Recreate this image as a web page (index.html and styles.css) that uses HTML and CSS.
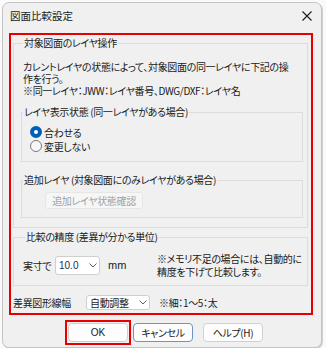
FILE: index.html
```html
<!DOCTYPE html>
<html lang="ja">
<head>
    <meta charset="UTF-8">
    <title>図面比較設定</title>
    <link rel="stylesheet" href="styles.css">
</head>
<body>
    <div class="window">
        <div class="titlebar">
            <span class="title">図面比較設定</span>
            <svg class="close" width="10" height="10" viewBox="0 0 10 10">
                <path d="M0.5 0.5 L9.5 9.5 M9.5 0.5 L0.5 9.5" stroke="#1b1b1b" stroke-width="1.1" fill="none"/>
            </svg>
        </div>
        <div class="mark">
            <fieldset class="group outer">
                <legend>対象図面のレイヤ操作</legend>
                <p class="desc">カレントレイヤの状態によって、対象図面の同一レイヤに下記の操<br>作を行う。<br>※同一レイヤ：JWW：レイヤ番号、DWG/DXF：レイヤ名</p>
                <fieldset class="group inner first">
                    <legend>レイヤ表示状態 (同一レイヤがある場合)</legend>
                    <div class="radios">
                        <label class="radio"><span class="dot checked"></span>合わせる</label>
                        <label class="radio"><span class="dot"></span>変更しない</label>
                    </div>
                </fieldset>
                <fieldset class="group inner second">
                    <legend>追加レイヤ (対象図面にのみレイヤがある場合)</legend>
                    <div class="btn-wrap">
                        <button class="btn-disabled" disabled>追加レイヤ状態確認</button>
                    </div>
                </fieldset>
            </fieldset>
            <fieldset class="group precision">
                <legend>比較の精度 (差異が分かる単位)</legend>
                <div class="row">
                    <span class="lbl-size">実寸で</span>
                    <div class="combo size">
                        <span class="val">10.0</span>
                        <svg width="8" height="5" viewBox="0 0 8 5"><path d="M0.5 0.5 L4 4 L7.5 0.5" stroke="#606060" fill="none"/></svg>
                    </div>
                    <span class="unit">mm</span>
                    <p class="note">※メモリ不足の場合には、自動的に<br>精度を下げて比較します。</p>
                </div>
            </fieldset>
            <div class="row linewidth">
                <span class="lbl-width">差異図形線幅</span>
                <div class="combo auto">
                    <span>自動調整</span>
                    <svg width="8" height="5" viewBox="0 0 8 5"><path d="M0.5 0.5 L4 4 L7.5 0.5" stroke="#606060" fill="none"/></svg>
                </div>
                <span class="hint">※細：1〜5：太</span>
            </div>
        </div>
        <div class="actions">
            <span class="mark-btn"><button class="btn ok">OK</button></span>
            <button class="btn cancel">キャンセル</button>
            <button class="btn help">ヘルプ(H)</button>
        </div>
    </div>
</body>
</html>
```

FILE: styles.css
```css
body { margin: 0; background: #fafafa; font-family: "Noto Sans CJK JP", "Noto Sans", sans-serif; font-size: 10px; letter-spacing: -0.35px; color: #1a1a1a; font-feature-settings: "palt"; white-space: nowrap; }
.window { margin: 2px 0 0 2px; width: 318px; border: 1px solid #c4c4c4; border-radius: 7px; background: #f0f0f0; padding-bottom: 2px; box-shadow: 1px 1px 0 #d0d0d0; }
.titlebar { height: 26px; display: flex; align-items: center; justify-content: space-between; padding: 0 9px 4px 7px; }
.title { font-size: 10.5px; letter-spacing: 0; line-height: 14px; }
.mark { margin: 0 8px 0 6px; border: 2px solid #e80000; padding: 0 0 3px 0; }
.group { border: 1px solid #dcdcdc; margin: 0; padding: 0; min-width: 0; }
.group legend { line-height: 14px; padding: 0 1px; margin-left: 2px; }
.outer { margin: 1px 3px 0 2px; padding: 11px 4px 9px 7px; }
.desc { margin: 0 0 0 2px; line-height: 12px; }
.inner { margin-top: 8px; }
.inner legend { margin-left: 1px; }
.second { margin-top: 11px; }
.radios { padding: 6px 0 8px 8px; }
.radio { display: flex; align-items: center; height: 14px; gap: 2px; }
.dot { width: 10px; height: 10px; border: 1px solid #7a7a7a; border-radius: 50%; background: #f7f7f7; }
.dot.checked { width: 4px; height: 4px; border: 4px solid #005fb8; background: #fff; }
.btn-wrap { padding: 5px 0 8px 23px; }
.btn-disabled { width: 98px; height: 17px; padding: 0; font: inherit; letter-spacing: inherit; font-feature-settings: "palt"; color: #a2a2a2; background: #f6f6f6; border: 1px solid #e6e6e6; border-radius: 3px; }
.precision { margin: 2px 3px 0 2px; padding: 8px 4px 7px 9px; }
.row { display: flex; align-items: center; }
.row > * { flex-shrink: 0; }
.lbl-size { width: 32px; }
.combo { display: flex; align-items: center; justify-content: space-between; box-sizing: border-box; background: #fff; border: 1px solid #cfcfcf; border-radius: 3px; padding: 0 2px 0 3px; }
.combo.size { width: 45px; height: 19px; }
.combo.size .val { color: #1d2760; font-family: "Liberation Sans", sans-serif; font-size: 10px; letter-spacing: 0; }
.unit { width: 49px; margin-left: 8px; font-family: "Liberation Sans", sans-serif; font-size: 11px; letter-spacing: 0; }
.note { margin: 0; line-height: 13px; }
.linewidth { margin-top: 8px; padding-left: 2px; height: 16px; }
.lbl-width { width: 73px; }
.combo.auto { width: 64px; height: 15px; }
.hint { margin-left: 9px; }
.actions { display: flex; align-items: center; margin: 5px 0 0 62px; }
.mark-btn { border: 2px solid #e80000; display: flex; align-items: center; height: 19px; padding: 1px; }
.btn { height: 19px; padding: 0; font: inherit; letter-spacing: inherit; font-feature-settings: "palt"; background: #fdfdfd; border: 1px solid #d0d0d0; border-radius: 4px; color: #1a1a1a; }
.ok { width: 60px; font-family: "Liberation Sans", sans-serif; font-size: 10px; letter-spacing: 0; }
.cancel { width: 60px; margin-left: 2px; border-color: #6f93c8; }
.help { width: 60px; margin-left: 10px; }
```
